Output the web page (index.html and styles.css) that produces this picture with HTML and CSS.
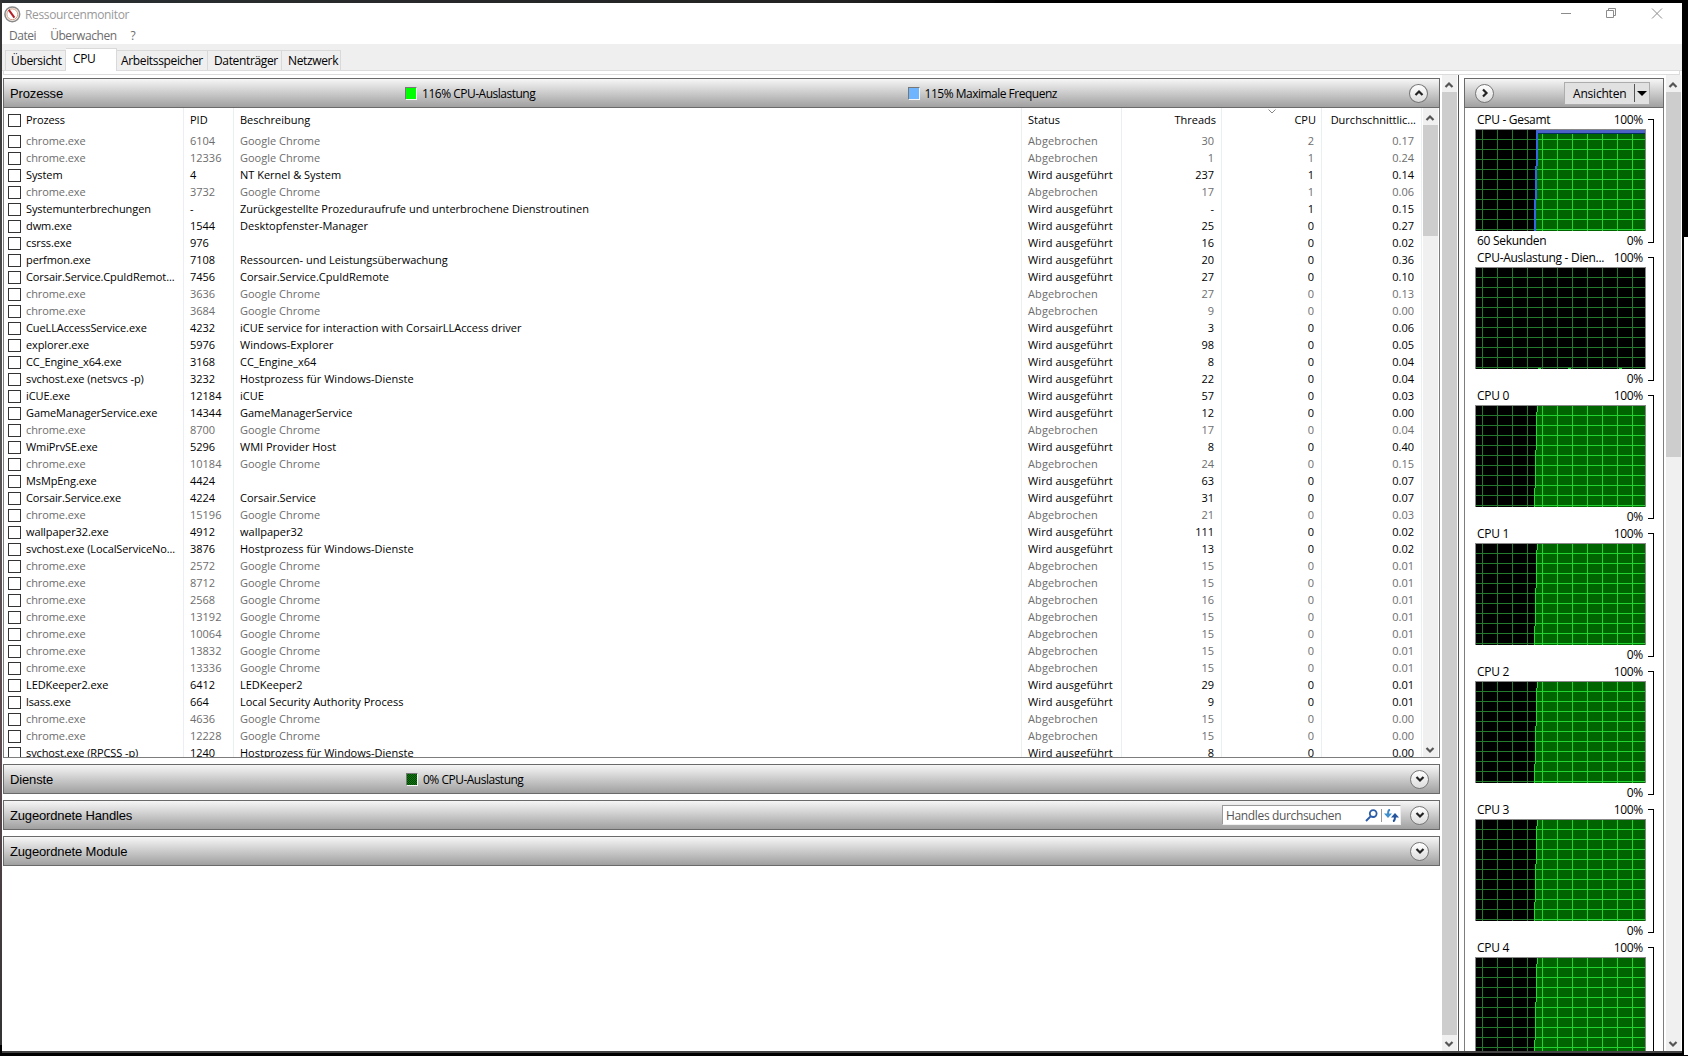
FILE: index.html
```
<!DOCTYPE html>
<html lang="de">
<head>
    <meta charset="UTF-8">
    <title>Ressourcenmonitor</title>
    <link rel="stylesheet" href="styles.css">
</head>
<body>
    <svg class="defs" width="0" height="0">
        <symbol id="up" viewBox="0 0 10 8"><path d="M1.5 6 5 2.5 8.5 6" fill="none" stroke="currentColor" stroke-width="2.2"/></symbol>
        <symbol id="down" viewBox="0 0 10 8"><path d="M1.5 2 5 5.5 8.5 2" fill="none" stroke="currentColor" stroke-width="2.2"/></symbol>
        <pattern id="grid" x="7" y="1" width="15" height="10" patternUnits="userSpaceOnUse">
            <path d="M0 9h15v1H0zM0 0h1v10H0z" fill="#237a2c"/>
        </pattern>
        <pattern id="gridLight" x="7" y="1" width="15" height="10" patternUnits="userSpaceOnUse">
            <path d="M0 9h15v1H0zM0 0h1v10H0z" fill="#22d430"/>
        </pattern>
    </svg>

    <div class="window">
        <header class="titlebar">
            <svg class="app-icon" width="17" height="17" viewBox="0 0 17 17">
                <circle cx="8.3" cy="8.3" r="7.4" fill="#f4f0ea" stroke="#8a8a8a" stroke-width="1.5"/>
                <circle cx="8.3" cy="8.3" r="5.4" fill="#fff" stroke="#d3a08c"/>
                <path d="M4.8 3.8 10.4 11.6" stroke="#b3202a" stroke-width="2"/>
            </svg>
            <span class="title">Ressourcenmonitor</span>
            <svg class="window-buttons" width="102" height="12" viewBox="0 0 102 12" fill="none" stroke="#8c8c8c">
                <path d="M0 6.5h10M45.5 3.5h7v7h-7zM47.5 3.5v-2h7v7h-2M91 1.5l10 10M101 1.5l-10 10"/>
            </svg>
        </header>
        <nav class="menu">
            <span>Datei</span>
            <span>Überwachen</span>
            <span>?</span>
        </nav>
        <div class="tabs">
            <span class="tab tab-overview">Übersicht</span>
            <span class="tab active">CPU</span>
            <span class="tab tab-memory">Arbeitsspeicher</span>
            <span class="tab tab-disk">Datenträger</span>
            <span class="tab tab-network">Netzwerk</span>
        </div>
        <div class="tab-edge"></div>

        <div class="content">
            <main class="left">
                <section class="panel processes">
                    <div class="bar">
                        <h2>Prozesse</h2>
                        <span class="legend"><i class="swatch green"></i>116% CPU-Auslastung</span>
                        <span class="legend"><i class="swatch blue"></i>115% Maximale Frequenz</span>
                        <button class="round"><svg width="10" height="8"><use href="#up"/></svg></button>
                    </div>
                    <div class="list">
                        <table>
                            <colgroup>
                                <col class="c-name"><col class="c-pid"><col class="c-desc"><col class="c-num"><col class="c-num"><col class="c-num"><col class="c-num">
                            </colgroup>
                            <thead>
                                <tr>
                                    <th><i class="check"></i>Prozess</th>
                                    <th>PID</th>
                                    <th>Beschreibung</th>
                                    <th>Status</th>
                                    <th class="num">Threads</th>
                                    <th class="num">CPU<svg class="sort" width="8" height="5"><path d="M.5 .5 4 4 7.5 .5" fill="none" stroke="#888"/></svg></th>
                                    <th class="num">Durchschnittlic...</th>
                                </tr>
                            </thead>
                            <tbody id="rows"></tbody>
                        </table>
                        <div class="scroll">
                            <svg width="10" height="8"><use href="#up"/></svg>
                            <div class="thumb list-thumb"></div>
                            <svg width="10" height="8"><use href="#down"/></svg>
                        </div>
                    </div>
                </section>
                <section class="panel">
                    <div class="bar">
                        <h2>Dienste</h2>
                        <span class="legend"><i class="swatch dark"></i>0% CPU-Auslastung</span>
                        <button class="round"><svg width="10" height="8"><use href="#down"/></svg></button>
                    </div>
                </section>
                <section class="panel">
                    <div class="bar">
                        <h2>Zugeordnete Handles</h2>
                        <div class="search">
                            <span>Handles durchsuchen</span>
                            <svg width="13" height="13" viewBox="0 0 13 13" fill="none">
                                <circle cx="8.2" cy="4.6" r="3.4" stroke="#2a5ca8" stroke-width="1.8"/>
                                <path d="M5.6 7.4 1 12" stroke="#2a5ca8" stroke-width="2"/>
                            </svg>
                            <svg class="refresh" width="15" height="13" viewBox="0 0 15 13">
                                <path d="M6 .5C4 1 4 2.5 4 5" fill="none" stroke="#3f86c4" stroke-width="2"/>
                                <path d="M0 4.5h8L4 9z" fill="#3f8fce"/>
                                <path d="M9 12.5c2-.5 2-2 2-4.5" fill="none" stroke="#24549c" stroke-width="2"/>
                                <path d="M7 8.5h8L11 4z" fill="#24549c"/>
                            </svg>
                        </div>
                        <button class="round"><svg width="10" height="8"><use href="#down"/></svg></button>
                    </div>
                </section>
                <section class="panel">
                    <div class="bar">
                        <h2>Zugeordnete Module</h2>
                        <button class="round"><svg width="10" height="8"><use href="#down"/></svg></button>
                    </div>
                </section>
            </main>
            <div class="scroll">
                <svg width="10" height="8"><use href="#up"/></svg>
                <div class="thumb full-thumb"></div>
                <svg width="10" height="8"><use href="#down"/></svg>
            </div>
            <div class="splitter"></div>
            <aside class="graphs">
                <div class="bar">
                    <button class="round"><svg width="8" height="10" viewBox="0 0 8 10"><path d="M2 1.5 5.5 5 2 8.5" fill="none" stroke="#222" stroke-width="2.2"/></svg></button>
                    <button class="views"><span>Ansichten</span><i></i></button>
                </div>
                <div id="graphs"></div>
            </aside>
            <div class="scroll">
                <svg width="10" height="8"><use href="#up"/></svg>
                <div class="thumb graph-thumb"></div>
                <svg width="10" height="8"><use href="#down"/></svg>
            </div>
        </div>
    </div>
    <script src="monitor.js"></script>
</body>
</html>
```
FILE: styles.css
```
body {
    display: flow-root;
    margin: 0;
    width: 1688px;
    height: 1056px;
    overflow: hidden;
    background: linear-gradient(#000, #000) 1682px 0 / 6px 237px no-repeat,
                linear-gradient(#000, #000) 1682px 0 / 2px 1056px no-repeat,
                linear-gradient(#fff, #fff) 1684px 237px / 4px 818px no-repeat,
                linear-gradient(#444, #444) 2px 1051px / 1680px 2px no-repeat,
                linear-gradient(#333, #555 40%, #5f4a50 70%, #333) 0 0 / 2px 1045px no-repeat,
                linear-gradient(90deg, #2b2f31, #222 50%, #000 60%) 0 0 / 100% 3px no-repeat,
                #000;
    font-family: "Open Sans", "Noto Sans", sans-serif;
    font-size: 12px;
    color: #000;
}
.defs {
    display: block;
}
.window {
    display: flex;
    flex-direction: column;
    width: 1680px;
    height: 1048px;
    margin: 3px 0 0 2px;
    background: #fff;
    overflow: hidden;
}
.titlebar {
    display: flex;
    height: 22px;
    padding-left: 2px;
    box-sizing: border-box;
}
.app-icon {
    margin-top: 3px;
}
.title {
    margin-left: 4px;
    line-height: 23px;
    color: #999;
    letter-spacing: -0.35px;
}
.window-buttons {
    margin: 4px 19px 0 auto;
}
.menu {
    display: flex;
    gap: 14px;
    height: 19px;
    padding-left: 7px;
    line-height: 21px;
    color: #6d6d6d;
    letter-spacing: -0.45px;
}
.tabs {
    display: flex;
    align-items: flex-end;
    height: 27px;
    padding-left: 3px;
    background: #efefef;
    box-sizing: border-box;
    border-bottom: 1px solid #dcdcdc;
}
.tab {
    height: 20px;
    padding-left: 5px;
    line-height: 20px;
    box-sizing: border-box;
    border: 1px solid #d9d9d9;
    border-left: 0;
    border-bottom: 0;
    letter-spacing: -0.35px;
    white-space: nowrap;
}
.tab.active {
    width: 51px;
    height: 23px;
    margin-bottom: -1px;
    padding-left: 7px;
    background: #fff;
}
.tab-overview { width: 61px; border-left: 1px solid #d9d9d9; }
.tab-memory { width: 91px; padding-left: 4px; }
.tab-disk { width: 74px; padding-left: 6px; }
.tab-network { width: 59px; padding-left: 6px; }
.tab-edge {
    height: 4px;
    margin: 0 2px 0 1px;
    box-sizing: border-box;
    border: 1px solid #dcdcdc;
    border-top: 0;
}
.content {
    display: flex;
    flex: 1;
    min-height: 0;
    padding: 0 1px;
}
.left {
    display: flex;
    flex-direction: column;
    gap: 6px;
    width: 1437px;
    padding-top: 3px;
}
.bar {
    display: flex;
    align-items: center;
    height: 30px;
    box-sizing: border-box;
    border: 1px solid #6a6a6a;
    background: linear-gradient(#f6f6f6, #a0a0a0);
}
.bar h2 {
    width: 396px;
    margin: 0 0 0 6px;
    font: 13px "Liberation Sans", sans-serif;
    letter-spacing: -0.15px;
}
.legend {
    display: flex;
    align-items: center;
    gap: 5px;
    width: 504px;
    letter-spacing: -0.5px;
}
.processes h2 {
    width: 397px;
}
.legend + .legend {
    margin-left: -1px;
    padding-left: 2px;
}
.swatch {
    width: 12px;
    height: 13px;
    box-sizing: border-box;
    border: 1px solid;
    border-color: #777 #f5f5f5 #f5f5f5 #777;
}
.green { background: #0f0; }
.blue { background: #6eb4ff; }
.dark { background: repeating-conic-gradient(#004500 0 25%, #0b780b 0 50%) 0 0 / 2px 2px; }
.round {
    display: flex;
    align-items: center;
    justify-content: center;
    width: 19px;
    height: 19px;
    padding: 0;
    margin: 0 10px 0 auto;
    border: 1px solid #777;
    border-radius: 50%;
    background: linear-gradient(#fff, #dcdcdc);
    color: #222;
}
.processes .round {
    margin-right: 11px;
}
.search {
    display: flex;
    align-items: center;
    width: 179px;
    height: 20px;
    margin-left: auto;
    padding-left: 3px;
    box-sizing: border-box;
    border: 1px solid #999;
    border-color: #999 #eee #eee #999;
    background: #fff;
    color: #555;
}
.search span {
    width: 139px;
    letter-spacing: -0.35px;
}
.search .refresh {
    margin-left: 3px;
    padding-left: 2px;
    border-left: 1px solid #999;
}
.search + .round {
    margin-left: 9px;
}
.processes {
    height: 680px;
}
.list {
    display: flex;
    height: 650px;
    box-sizing: border-box;
    border: 1px solid #7d7d7d;
    border-top: 0;
    overflow: hidden;
}
table {
    width: 1418px;
    height: 0;
    table-layout: fixed;
    border-collapse: separate;
    border-spacing: 0;
    font-size: 11px;
}
.c-name { width: 180px; }
.c-pid { width: 50px; }
.c-desc { width: 788px; }
.c-num { width: 100px; }
td, th {
    height: 17px;
    padding: 0 0 0 6px;
    line-height: 17px;
    border-right: 1px solid #e9eff2;
    font-weight: normal;
    text-align: left;
    white-space: nowrap;
    overflow: hidden;
    box-sizing: border-box;
}
th {
    position: relative;
    height: 24px;
    padding-bottom: 1px;
}
td:first-child, th:first-child {
    padding-left: 4px;
    letter-spacing: -0.1px;
}
td:nth-child(4) {
    letter-spacing: 0.12px;
}
td.num {
    padding-right: 7px;
    text-align: right;
}
th.num {
    padding-right: 5px;
    text-align: right;
}
.sort {
    position: absolute;
    top: 1px;
    left: 46px;
}
.check {
    display: inline-block;
    width: 13px;
    height: 13px;
    margin-right: 5px;
    box-sizing: border-box;
    border: 1px solid #333;
    vertical-align: -3px;
}
.ended td {
    color: #6d6d6d;
}
.scroll {
    display: flex;
    flex-direction: column;
    align-items: center;
    width: 15px;
    margin-left: 2px;
    background: #f0f0f0;
    color: #555;
}
.list .scroll {
    margin-left: 1px;
}
.scroll svg {
    flex: none;
    margin: 6px 1px 3px 0;
}
.scroll svg:last-child {
    margin-top: auto;
}
.thumb {
    width: 100%;
    background: #cdcdcd;
}
.list-thumb { height: 111px; }
.full-thumb { height: 943px; }
.graph-thumb { height: 365px; }
.splitter {
    width: 1px;
    margin: 0 5px 0 1px;
    background: #555;
}
.graphs {
    width: 200px;
    margin-top: 3px;
    box-sizing: border-box;
    overflow: hidden;
}
.graphs .round {
    margin: 0 0 0 10px;
}
#graphs {
    height: 1000px;
    padding: 2px 0 0 10px;
    border: 1px solid #7d7d7d;
    border-top: 0;
}
.views {
    display: flex;
    align-items: center;
    width: 86px;
    height: 23px;
    margin: 0 13px 0 auto;
    padding: 0 2px 0 8px;
    border: 1px solid #adadad;
    background: #e1e1e1;
    font: 12px "Open Sans", sans-serif;
    letter-spacing: -0.2px;
}
.views span {
    width: 62px;
    text-align: left;
}
.views i {
    height: 18px;
    border-left: 1px solid #555;
}
.views i::after {
    content: "";
    display: block;
    margin: 7px 0 0 2px;
    border: 5px solid transparent;
    border-top-color: #000;
    border-bottom: 0;
}
.graph {
    display: grid;
    grid-template-columns: 171px 9px;
    grid-template-rows: 19px 102px 17px;
    letter-spacing: -0.3px;
}
.caption {
    display: flex;
    justify-content: space-between;
    padding: 0 3px 0 2px;
    line-height: 20px;
}
.graph svg {
    grid-row: 2;
    grid-column: 1;
}
.bracket {
    grid-row: 1 / 4;
    grid-column: 2;
    width: 6px;
    height: 124px;
    margin: 9px 0 0 2px;
    box-sizing: border-box;
    border: 1px solid #000;
    border-left: 0;
}
```
FILE: monitor.js
```
// name | pid | description | threads | cpu | average, "*" marks ended processes
const processes = `
*chrome.exe|6104|Google Chrome|30|2|0.17
*chrome.exe|12336|Google Chrome|1|1|0.24
System|4|NT Kernel & System|237|1|0.14
*chrome.exe|3732|Google Chrome|17|1|0.06
Systemunterbrechungen|-|Zurückgestellte Prozeduraufrufe und unterbrochene Dienstroutinen|-|1|0.15
dwm.exe|1544|Desktopfenster-Manager|25|0|0.27
csrss.exe|976||16|0|0.02
perfmon.exe|7108|Ressourcen- und Leistungsüberwachung|20|0|0.36
Corsair.Service.CpuIdRemot...|7456|Corsair.Service.CpuIdRemote|27|0|0.10
*chrome.exe|3636|Google Chrome|27|0|0.13
*chrome.exe|3684|Google Chrome|9|0|0.00
CueLLAccessService.exe|4232|iCUE service for interaction with CorsairLLAccess driver|3|0|0.06
explorer.exe|5976|Windows-Explorer|98|0|0.05
CC_Engine_x64.exe|3168|CC_Engine_x64|8|0|0.04
svchost.exe (netsvcs -p)|3232|Hostprozess für Windows-Dienste|22|0|0.04
iCUE.exe|12184|iCUE|57|0|0.03
GameManagerService.exe|14344|GameManagerService|12|0|0.00
*chrome.exe|8700|Google Chrome|17|0|0.04
WmiPrvSE.exe|5296|WMI Provider Host|8|0|0.40
*chrome.exe|10184|Google Chrome|24|0|0.15
MsMpEng.exe|4424||63|0|0.07
Corsair.Service.exe|4224|Corsair.Service|31|0|0.07
*chrome.exe|15196|Google Chrome|21|0|0.03
wallpaper32.exe|4912|wallpaper32|111|0|0.02
svchost.exe (LocalServiceNo...|3876|Hostprozess für Windows-Dienste|13|0|0.02
*chrome.exe|2572|Google Chrome|15|0|0.01
*chrome.exe|8712|Google Chrome|15|0|0.01
*chrome.exe|2568|Google Chrome|16|0|0.01
*chrome.exe|13192|Google Chrome|15|0|0.01
*chrome.exe|10064|Google Chrome|15|0|0.01
*chrome.exe|13832|Google Chrome|15|0|0.01
*chrome.exe|13336|Google Chrome|15|0|0.01
LEDKeeper2.exe|6412|LEDKeeper2|29|0|0.01
lsass.exe|664|Local Security Authority Process|9|0|0.01
*chrome.exe|4636|Google Chrome|15|0|0.00
*chrome.exe|12228|Google Chrome|15|0|0.00
svchost.exe (RPCSS -p)|1240|Hostprozess für Windows-Dienste|8|0|0.00`.trim().split('\n');

document.getElementById('rows').innerHTML = processes.map(line => {
    const ended = line[0] === '*';
    const [name, pid, desc, threads, cpu, avg] = line.replace('*', '').replace('&', '&amp;').split('|');
    return `<tr class="${ended ? 'ended' : ''}">
        <td><i class="check"></i>${name}</td><td>${pid}</td><td>${desc}</td>
        <td>${ended ? 'Abgebrochen' : 'Wird ausgeführt'}</td>
        <td class="num">${threads}</td><td class="num">${cpu}</td><td class="num">${avg}</td>
    </tr>`;
}).join('');

const load = `<path d="M62 1h108v101H59V83h1V45h1V7h1z" fill="#006400"/>
    <path d="M62 1h108v101H59V83h1V45h1V7h1z" fill="url(#gridLight)"/>
    <path d="M62 1v6h-1v38h-1v38h-1v19h1V83h1V45h1V7h1V1z" fill="#20dc30"/>`;
const total = `<path d="M62 1h108v101H60V70h1V37h1z" fill="#006400"/>
    <path d="M62 1h108v101H60V70h1V37h1z" fill="url(#gridLight)"/>
    <path d="M61 1h109v3H61z" fill="#4c62c4"/><path d="M63 4h107v1H63z" fill="#003060"/>
    <path d="M61 2h2v35h-1v33h-1v32h-2V70h1V37h1z" fill="#3468e0"/>`;
const idle = '<path d="M63 101h3v1h-3zM93 101h3v1h-3zM144 101h3v1h-3z" fill="#30e040"/>';

const graphs = [
    ['CPU - Gesamt', total, '60 Sekunden'],
    ['CPU-Auslastung - Dien...', idle, ''],
    ['CPU 0', load, ''],
    ['CPU 1', load, ''],
    ['CPU 2', load, ''],
    ['CPU 3', load, ''],
    ['CPU 4', load, '']
];

document.getElementById('graphs').innerHTML = graphs.map(([title, shape, time]) => `
    <div class="graph">
        <div class="caption"><span>${title}</span><span>100%</span></div>
        <svg width="171" height="102" shape-rendering="crispEdges">
            <rect width="171" height="102" fill="#888"/>
            <rect x="1" y="1" width="169" height="101" fill="#000"/>
            <rect x="1" y="1" width="169" height="101" fill="url(#grid)"/>
            ${shape}
        </svg>
        <div class="caption"><span>${time}</span><span>0%</span></div>
        <div class="bracket"></div>
    </div>`).join('');
```
